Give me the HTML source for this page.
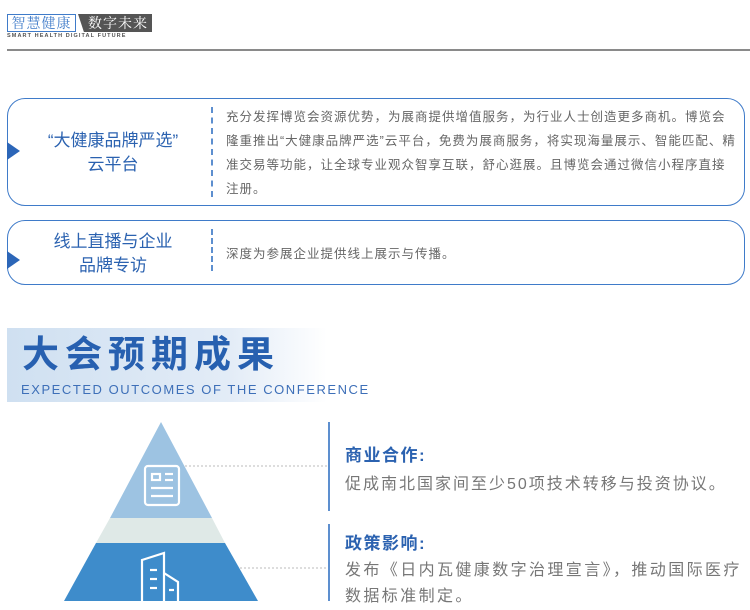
<!DOCTYPE html>
<html><head><meta charset="utf-8"><style>
*{margin:0;padding:0;box-sizing:border-box}
body{width:750px;height:601px;overflow:hidden;background:#fff;position:relative;font-family:"Liberation Sans","Noto Sans CJK SC",sans-serif}
.a{position:absolute;white-space:nowrap}
.box{position:absolute;left:7px;width:738px;border:1.5px solid #3f7bc9;border-radius:18px}
.tri{position:absolute;left:-1px;width:0;height:0;border-top:9px solid transparent;border-bottom:9px solid transparent;border-left:13px solid #2c66b8}
.ttl{position:absolute;left:0;width:210px;text-align:center;color:#2b62b0;font-size:17px;line-height:24px}
.dash{position:absolute;left:203px;border-left:2px dashed #5d8fcf}
.txt{position:absolute;left:218px;color:#666;font-size:12.5px;line-height:24px;letter-spacing:1px;width:510px}
</style></head><body>
<div class="a" style="left:7px;top:14px;width:69px;height:18px;border:1px solid #3f7bc9;color:#3f7bc9;font-size:14px;line-height:16px;text-align:center;font-family:'Noto Serif CJK SC',serif;letter-spacing:1px">智慧健康</div>
<div class="a" style="left:78px;top:14px;width:74px;height:18px;background:#555;clip-path:polygon(0 0,100% 0,100% 100%,8% 100%);color:#fff;font-size:14px;line-height:18px;padding-left:10px;font-family:'Noto Serif CJK SC',serif;letter-spacing:1px">数字未来</div>
<div class="a" style="left:7px;top:33px;font-size:5.5px;color:#555;letter-spacing:1.1px;font-weight:bold">SMART HEALTH DIGITAL FUTURE</div>
<div class="a" style="left:7px;top:49px;width:743px;height:2px;background:#8a8a8a"></div>

<div class="box" style="top:98px;height:108px">
<div class="tri" style="top:43px"></div>
<div class="ttl" style="top:30px">“大健康品牌严选”<br>云平台</div>
<div class="dash" style="top:8px;height:90px"></div>
<div class="txt" style="top:6px">充分发挥博览会资源优势，为展商提供增值服务，为行业人士创造更多商机。博览会隆重推出“大健康品牌严选”云平台，免费为展商服务，将实现海量展示、智能匹配、精准交易等功能，让全球专业观众智享互联，舒心逛展。且博览会通过微信小程序直接注册。</div>
</div>
<div class="box" style="top:220px;height:65px">
<div class="tri" style="top:30px"></div>
<div class="ttl" style="top:9px">线上直播与企业<br>品牌专访</div>
<div class="dash" style="top:8px;height:42px"></div>
<div class="txt" style="top:21px">深度为参展企业提供线上展示与传播。</div>
</div>

<div class="a" style="left:7px;top:328px;width:320px;height:74px;background:linear-gradient(90deg,#cfe0f1,#e3ecf7 70%,#fff)"></div>
<div class="a" style="left:22px;top:331px;font-size:37px;font-weight:bold;color:#2760b0;letter-spacing:6px;line-height:48px">大会预期成果</div>
<div class="a" style="left:21px;top:382px;font-size:13px;color:#3d6fb8;letter-spacing:1.55px">EXPECTED OUTCOMES OF THE CONFERENCE</div>

<svg class="a" style="left:0;top:410px" width="330" height="191">
<polygon points="161,12 212,108 110,108" fill="#9dc3e2"/>
<polygon points="110,108 212,108 225,133 96,133" fill="#dfe9e7"/>
<polygon points="96,133 225,133 258,191 64,191" fill="#3e8ccb"/>
<line x1="185" y1="56" x2="328" y2="56" stroke="#bbb" stroke-dasharray="2,2"/>
<line x1="240" y1="158" x2="328" y2="158" stroke="#bbb" stroke-dasharray="2,2"/>
<g fill="none" stroke="#fff" stroke-width="2.2">
<rect x="145" y="56" width="34" height="39" rx="3"/>
<rect x="152" y="64" width="8" height="6"/>
<line x1="165" y1="64" x2="173" y2="64"/><line x1="165" y1="70" x2="173" y2="70"/>
<line x1="151" y1="78" x2="173" y2="78"/><line x1="151" y1="86" x2="173" y2="86"/>
<path d="M142,193 V150 L164,143 V193 M164,163 L178,172 V193 M139,193 H183"/>
<line x1="150" y1="160" x2="157" y2="160"/><line x1="150" y1="169" x2="157" y2="169"/><line x1="150" y1="178" x2="157" y2="178"/>
<line x1="169" y1="180" x2="174" y2="180"/>
</g>
</svg>
<div class="a" style="left:328px;top:422px;width:2px;height:89px;background:#5d8fcf"></div>
<div class="a" style="left:328px;top:524px;width:2px;height:77px;background:#5d8fcf"></div>
<div class="a" style="left:345px;top:441px;font-size:17px;color:#2b62b0;letter-spacing:1.5px;font-weight:bold">商业合作:</div>
<div class="a" style="left:345px;top:470px;font-size:16px;color:#777;letter-spacing:2px">促成南北国家间至少50项技术转移与投资协议。</div>
<div class="a" style="left:345px;top:529px;font-size:17px;color:#2b62b0;letter-spacing:1.5px;font-weight:bold">政策影响:</div>
<div class="a" style="left:345px;top:558px;font-size:16px;color:#777;letter-spacing:2.4px;line-height:26px">发布《日内瓦健康数字治理宣言》，推动国际医疗<br>数据标准制定。</div>
</body></html>
